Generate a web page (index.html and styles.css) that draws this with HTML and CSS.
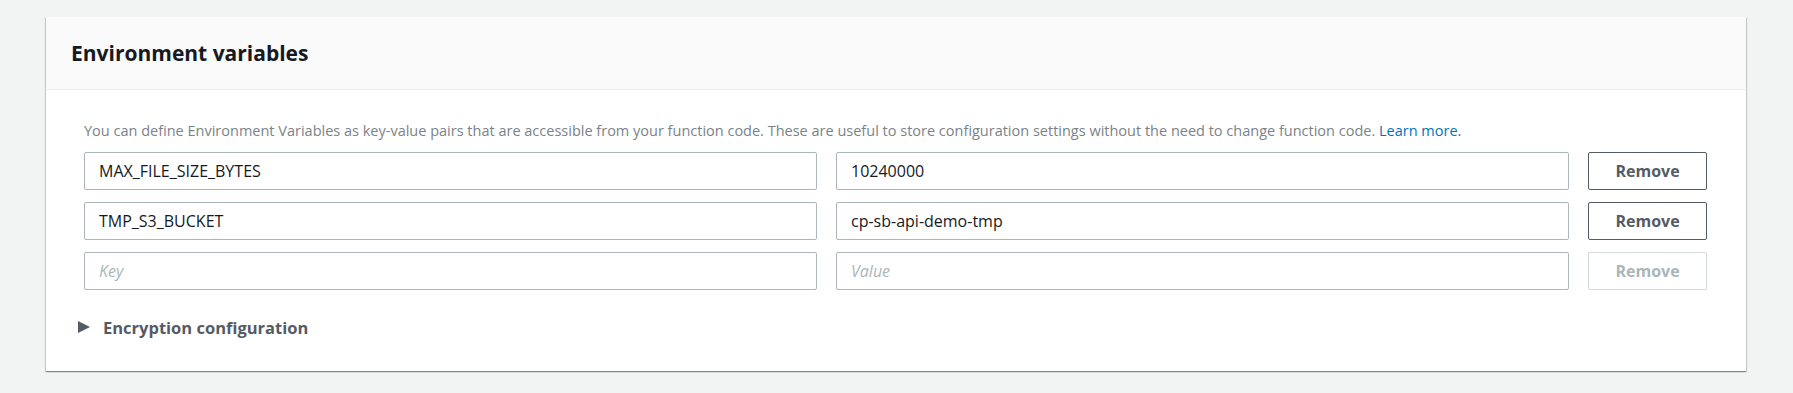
FILE: index.html
```html
<!DOCTYPE html>
<html lang="en">
<head>
  <meta charset="UTF-8" />
  <title>Environment variables</title>
  <link rel="stylesheet" href="styles.css">
</head>
<body>
  <div class="page">
    <div class="card">
      <div class="card-header">
        <h2>Environment variables</h2>
      </div>
      <div class="card-body">
        <p class="hint">You can define Environment Variables as key-value pairs that are accessible from your function code. These are useful to store configuration settings without the need to change function code. <a href="#">Learn more.</a></p>

        <div class="env-rows">
          <div class="env-row">
            <input class="field" type="text" value="MAX_FILE_SIZE_BYTES">
            <input class="field" type="text" value="10240000">
            <button class="remove">Remove</button>
          </div>
          <div class="env-row">
            <input class="field" type="text" value="TMP_S3_BUCKET">
            <input class="field" type="text" value="cp-sb-api-demo-tmp">
            <button class="remove">Remove</button>
          </div>
          <div class="env-row">
            <input class="field" type="text" placeholder="Key">
            <input class="field" type="text" placeholder="Value">
            <button class="remove" disabled>Remove</button>
          </div>
        </div>

        <div class="expander">
          <span class="caret"></span>
          <span>Encryption configuration</span>
        </div>
      </div>
    </div>
  </div>
</body>
</html>
```

FILE: styles.css
```css
body {
  margin: 0;
  background-color: #f2f3f3;
  font-family: "Open Sans", "Liberation Sans", sans-serif;
  color: #16191f;
}

.page {
  padding: 17px 47px 21px 46px;
}

.card {
  background-color: #fff;
  box-shadow: 0 1px 1px 0 rgba(0, 28, 36, 0.3), 1px 1px 1px 0 rgba(0, 28, 36, 0.15), -1px 1px 1px 0 rgba(0, 28, 36, 0.15);
}

.card-header {
  height: 72px;
  display: flex;
  align-items: center;
  padding: 0 25px;
  background-color: #fafafa;
  border-bottom: 1px solid #eaeded;
}

.card-header h2 {
  margin: 0;
  font-size: 21px;
  font-weight: bold;
  color: #16191f;
}

.card-body {
  padding: 31px 39px 34px 38px;
}

.hint {
  margin: 0 0 11px;
  font-size: 14.5px;
  line-height: 20px;
  color: #7b8389;
}

.hint a {
  color: #0073bb;
  text-decoration: none;
}

.env-rows {
  display: flex;
  flex-direction: column;
  gap: 12px;
}

.env-row {
  display: flex;
  gap: 19px;
}

.field {
  flex: 1;
  height: 38px;
  box-sizing: border-box;
  padding: 0 14px;
  border: 1px solid #aab7b8;
  border-radius: 2px;
  font-family: "Open Sans", "Liberation Sans", sans-serif;
  font-size: 16px;
  color: #16191f;
  outline: none;
}

.field::placeholder {
  color: #aab7b8;
  font-style: italic;
}

.remove {
  width: 119px;
  height: 38px;
  box-sizing: border-box;
  border: 1px solid #545b64;
  border-radius: 2px;
  background-color: #fff;
  color: #545b64;
  font-family: "Open Sans", "Liberation Sans", sans-serif;
  font-size: 16px;
  font-weight: bold;
  cursor: pointer;
}

.remove:disabled {
  border-color: #d5dbdb;
  color: #aab7b8;
  cursor: default;
}

.expander {
  display: flex;
  align-items: center;
  margin-top: 27px;
  height: 20px;
  font-size: 16.5px;
  font-weight: bold;
  color: #545b64;
}

.caret {
  width: 0;
  height: 0;
  margin: 0 13px 0 -6px;
  border-top: 6px solid transparent;
  border-bottom: 6px solid transparent;
  border-left: 12px solid #545b64;
}
```
